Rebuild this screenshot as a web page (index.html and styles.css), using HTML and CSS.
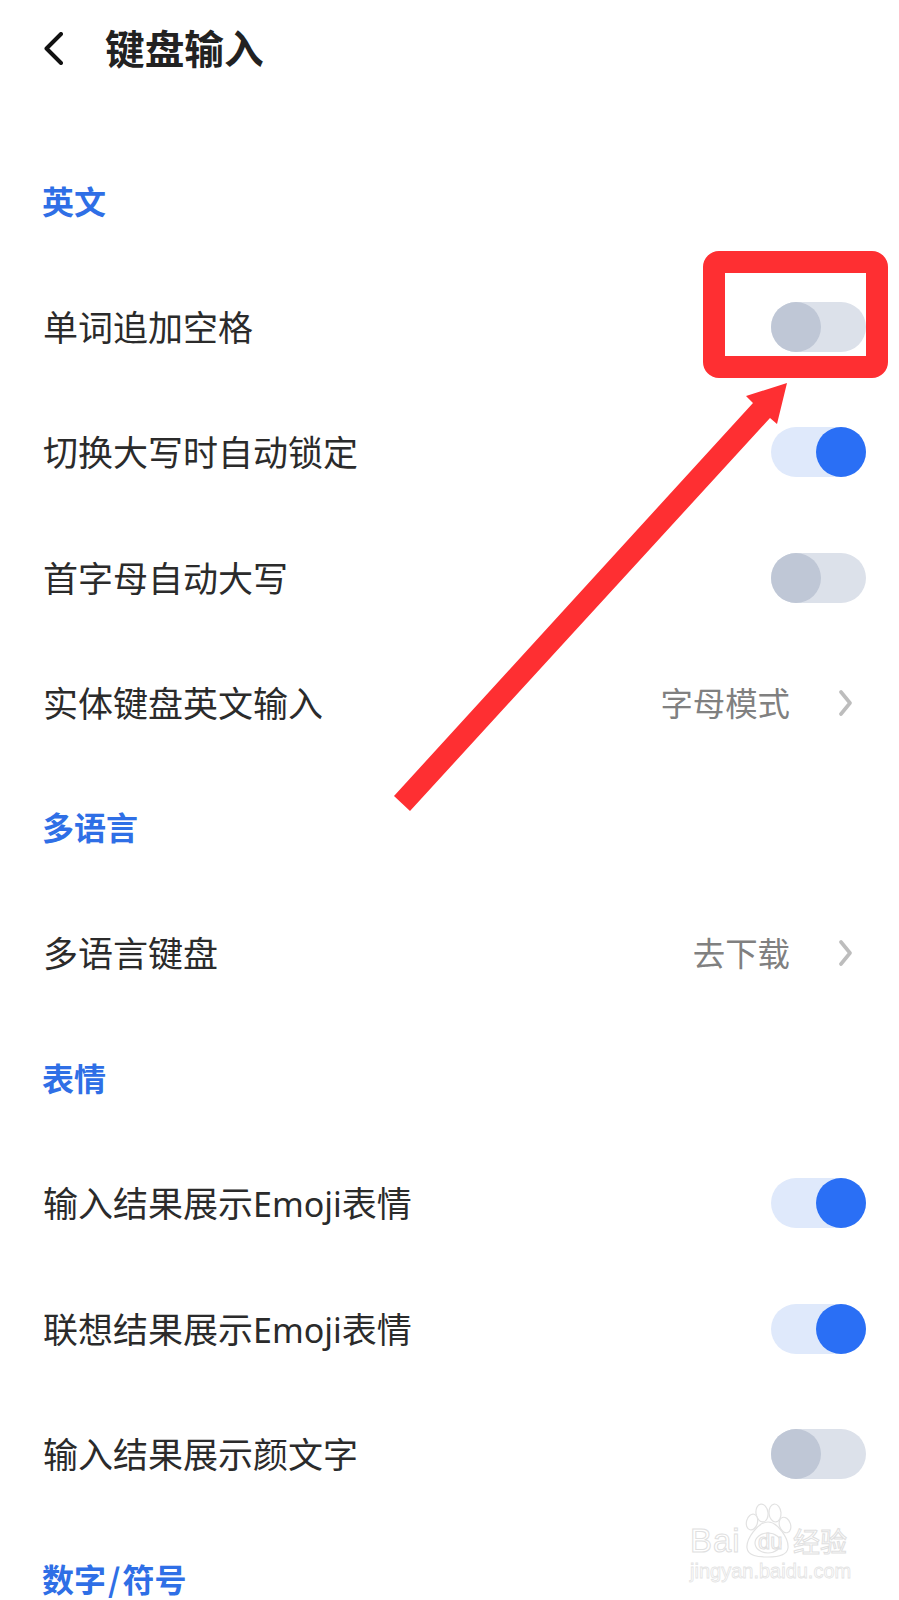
FILE: index.html
```html
<!DOCTYPE html>
<html lang="zh-CN">
<head>
<meta charset="utf-8">
<title>键盘输入</title>
<link rel="stylesheet" href="styles.css">
</head>
<body>
<main class="page">
  <header class="topbar">
    <svg class="back" viewBox="0 0 19 33" width="19" height="33"><path d="M17 2 L2.5 16.5 L17 31" fill="none" stroke="#111" stroke-width="4" stroke-linecap="round" stroke-linejoin="round"/></svg>
    <h1 class="title">键盘输入</h1>
  </header>
  <div class="list">
    <h2 class="section"><span>英文</span></h2>
    <div class="row"><span class="label">单词追加空格</span><span class="toggle"></span></div>
    <div class="row"><span class="label">切换大写时自动锁定</span><span class="toggle on"></span></div>
    <div class="row"><span class="label">首字母自动大写</span><span class="toggle"></span></div>
    <div class="row"><span class="label">实体键盘英文输入</span><span class="value">字母模式</span><svg class="chev" viewBox="0 0 13 26" width="13" height="26"><path d="M2 2 L11 13 L2 24" fill="none" stroke="#bdbdbd" stroke-width="3.6" stroke-linecap="round" stroke-linejoin="round"/></svg></div>
    <h2 class="section"><span>多语言</span></h2>
    <div class="row"><span class="label">多语言键盘</span><span class="value">去下载</span><svg class="chev" viewBox="0 0 13 26" width="13" height="26"><path d="M2 2 L11 13 L2 24" fill="none" stroke="#bdbdbd" stroke-width="3.6" stroke-linecap="round" stroke-linejoin="round"/></svg></div>
    <h2 class="section"><span>表情</span></h2>
    <div class="row"><span class="label">输入结果展示<span class="latin">Emoji</span>表情</span><span class="toggle on"></span></div>
    <div class="row"><span class="label">联想结果展示<span class="latin">Emoji</span>表情</span><span class="toggle on"></span></div>
    <div class="row"><span class="label">输入结果展示颜文字</span><span class="toggle"></span></div>
    <h2 class="section"><span>数字<span class="slash">/</span>符号</span></h2>
  </div>

  <svg class="annotation" viewBox="0 0 899 1600" width="899" height="1600">
    <rect class="mark-box" x="714" y="262" width="163" height="105" rx="5"/>
    <polygon class="mark-arrow" points="787,383 777,424 770,418 410,811 394,796 753,403 746,396"/>
  </svg>

  <div class="watermark">
    <svg class="paw" viewBox="0 0 60 60" width="60" height="60">
      <g fill="#fff" stroke="#e2e2e2" stroke-width="1.2">
        <ellipse cx="18" cy="10" rx="6" ry="9" transform="rotate(-8 18 10)"/>
        <ellipse cx="31" cy="10" rx="6" ry="9" transform="rotate(-5 31 10)"/>
        <ellipse cx="41" cy="22" rx="5.5" ry="8" transform="rotate(-20 41 22)"/>
        <ellipse cx="8" cy="19" rx="5.5" ry="8" transform="rotate(15 8 19)"/>
        <path d="M24 19 C34 19 45 36 44 45 C43 53 33 54 24 54 C14 54 4 53 3 45 C2 36 14 19 24 19 Z"/>
        <ellipse cx="24" cy="40" rx="13" ry="10"/>
      </g>
    </svg>
    <span class="wm wm-bai">Bai</span>
    <span class="wm wm-du">du</span>
    <span class="wm wm-cn">经验</span>
    <span class="wm wm-url">jingyan.baidu.com</span>
  </div>
</main>
</body>
</html>
```

FILE: styles.css
```css
* { box-sizing: border-box; margin: 0; padding: 0; }
html, body { background: #fff; }
body { width: 899px; height: 1600px; overflow: hidden; font-family: "Noto Sans CJK SC", "Noto Sans", sans-serif; }
.page { position: relative; width: 899px; height: 1600px; overflow: hidden; }

.topbar { display: flex; align-items: center; height: 97px; padding-left: 44px; }
.back { flex: none; margin-right: 42px; }
.title { font-size: 39.7px; font-weight: 700; color: #222; line-height: 1; padding-bottom: 4px; }

.list { margin-top: 42.4px; }
.section { display: flex; align-items: center; height: 125.2px; padding: 0 0 3px 42px; font-size: 32px; font-weight: 700; color: #2f6fe6; white-space: nowrap; }
.slash { margin: 0 2px; }
.row { display: flex; align-items: center; height: 125.2px; padding: 0 33px 0 43px; }
.label { flex: 1; font-size: 35px; font-weight: 400; color: #2b2b2b; white-space: nowrap; padding-bottom: 3px; }
.latin { font-family: "Noto Sans", sans-serif; font-size: 34px; }
.value { font-size: 32.4px; color: #808080; margin-right: 49px; padding-bottom: 3px; white-space: nowrap; }
.chev { flex: none; margin-right: 14px; }

.toggle { position: relative; flex: none; width: 95px; height: 50px; border-radius: 25px; background: #dce1ea; }
.toggle::after { content: ""; position: absolute; top: 0; left: 0; width: 50px; height: 50px; border-radius: 50%; background: #bfc7d6; }
.toggle.on { background: #dfe9fb; }
.toggle.on::after { left: 45px; background: #2a6ff5; }

.annotation { position: absolute; top: 0; left: 0; pointer-events: none; }
.mark-box { fill: none; stroke: #fe2f32; stroke-width: 22; }
.mark-arrow { fill: #fe2f32; }

.watermark { position: absolute; left: 690px; top: 1503px; width: 160px; height: 85px; }
.paw { position: absolute; left: 54px; top: 0; }
.wm { position: absolute; line-height: 1; color: #fff; white-space: nowrap; font-family: "Liberation Sans", sans-serif; -webkit-text-stroke: 1px #e0e0e0; }
.wm-bai { left: 0; top: 21px; font-size: 33px; letter-spacing: 1px; }
.wm-du { left: 68px; top: 28px; font-size: 22px; }
.wm-cn { left: 103px; top: 24px; font-size: 27px; font-family: "Noto Sans CJK SC", sans-serif; }
.wm-url { left: 0; top: 58px; font-size: 20px; -webkit-text-stroke: 0.8px #e4e4e4; }
```
